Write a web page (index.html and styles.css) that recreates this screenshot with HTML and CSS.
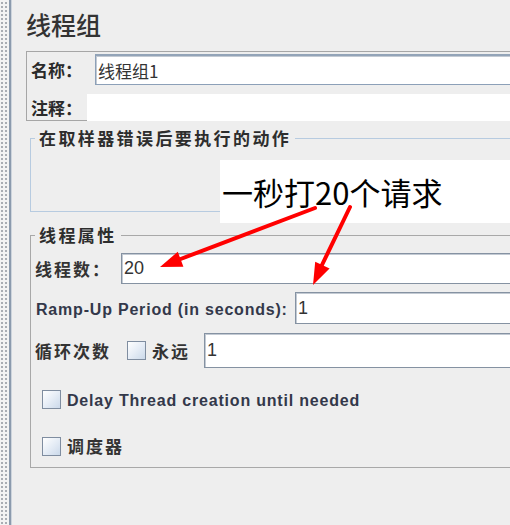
FILE: index.html
```html
<!DOCTYPE html>
<html lang="zh">
<head>
<meta charset="utf-8">
<title>线程组</title>
<link rel="stylesheet" href="styles.css">
</head>
<body>
<div class="app">
  <div class="sidebar"></div>
  <div class="main">
    <h1 class="title">线程组</h1>
    <div class="name-panel">
      <div class="row name-row">
        <span class="label strong">名称：</span>
        <div class="field name-field">线程组1</div>
      </div>
      <div class="row comment-row">
        <span class="label strong">注释：</span>
        <div class="field plain"></div>
      </div>
    </div>
    <fieldset class="group blue">
      <legend>在取样器错误后要执行的动作</legend>
      <div class="group-body empty"></div>
    </fieldset>
    <fieldset class="group gray">
      <legend>线程属性</legend>
      <div class="row r1">
        <span class="label cjk">线程数：</span>
        <div class="field f1">20</div>
      </div>
      <div class="row r2">
        <span class="label en">Ramp-Up Period (in seconds):</span>
        <div class="field f2">1</div>
      </div>
      <div class="row r3">
        <span class="label cjk">循环次数</span>
        <span class="checkbox cb-loop"></span>
        <span class="label cjk forever">永远</span>
        <div class="field f3">1</div>
      </div>
      <div class="row r4">
        <span class="checkbox"></span>
        <span class="label en">Delay Thread creation until needed</span>
      </div>
      <div class="row r5">
        <span class="checkbox"></span>
        <span class="label cjk">调度器</span>
      </div>
    </fieldset>
  </div>
  <div class="callout">一秒打20个请求</div>
  <svg class="arrows" width="510" height="525" viewBox="0 0 510 525">
    <g stroke="#ff0000" stroke-width="4" stroke-linecap="round" fill="none">
      <path d="M315 208 L178 260"/>
      <path d="M350 207 L321 267"/>
    </g>
    <g fill="#ff0000">
      <polygon points="160,267 177.8,251.7 183.4,266.7"/>
      <polygon points="313,285 315.2,261.7 329.6,268.5"/>
    </g>
  </svg>
</div>
</body>
</html>
```
FILE: styles.css
```css
html, body {
  margin: 0;
  padding: 0;
}
body {
  width: 510px;
  height: 525px;
  overflow: hidden;
  background: #eeeeee;
  font-family: "Noto Sans CJK SC", "Liberation Sans", sans-serif;
  color: #333333;
}
.app {
  position: relative;
  display: flex;
  width: 510px;
  height: 525px;
  overflow: hidden;
}
.sidebar {
  flex: 0 0 9px;
  height: 525px;
  background-color: #f3f3f3;
  background-image: radial-gradient(circle, #a9adb3 0.8px, transparent 1.2px);
  background-size: 4px 4px;
  background-position: 0 1px;
  border-right: 2px solid #8b9aad;
  box-shadow: 1px 0 0 #cdd4dc;
}
.main {
  flex: 0 0 560px;
  padding: 12px 0 0 15px;
  box-sizing: border-box;
}
.title {
  margin: 0 0 15px 0;
  font-size: 25px;
  line-height: 24px;
  height: 24px;
  font-weight: 500;
  color: #333333;
}
.name-panel {
  border: 1px solid #a6a6a6;
  padding: 2px 0 0 0;
  height: 70px;
  box-sizing: border-box;
}
.row {
  display: flex;
  align-items: center;
}
.label {
  font-size: 17px;
  line-height: 20px;
  white-space: nowrap;
}
.label.strong {
  font-weight: 700;
  color: #2a2a2a;
}
.name-row {
  height: 31px;
  padding-left: 4px;
}
.name-row .label {
  width: 64px;
}
.name-field {
  flex: 1;
  height: 31px;
}
.comment-row {
  margin-top: 9px;
  height: 27px;
  padding-left: 4px;
}
.comment-row .label {
  width: 56px;
}
.field {
  box-sizing: border-box;
  background: #ffffff;
  border: 1px solid #8592a2;
  border-right: none;
  box-shadow: inset 1px 1px 0 #c3cad3;
  font-family: "Liberation Sans", "Noto Sans CJK SC", sans-serif;
  font-size: 18px;
  color: #333333;
  padding-left: 2px;
  display: flex;
  align-items: center;
}
.name-field {
  font-family: "Noto Sans CJK SC", sans-serif;
  font-size: 17px;
  border-color: #8ca0b8;
  border-top: 2px solid #93a4b8;
}
.field.plain {
  flex: 1;
  height: 27px;
  border: none;
  box-shadow: none;
}
.group {
  margin: 0 0 0 4px;
  padding: 0 0 0 4px;
  min-width: 0;
  border: 1px solid #a8a8a8;
  border-right: none;
}
.group legend {
  padding: 0 4px;
  font-size: 17px;
  line-height: 18px;
  font-weight: 700;
  letter-spacing: 2.4px;
  color: #2d2d2d;
}
.group.blue {
  margin-top: 8px;
  border-color: #b7cbe0;
}
.group-body.empty {
  height: 64px;
}
.group.gray {
  margin-top: 14px;
  padding-bottom: 6px;
}
.label.cjk {
  font-weight: 700;
  letter-spacing: 2px;
  color: #333333;
}
.label.en {
  font-family: "Liberation Sans", Arial, sans-serif;
  font-weight: 700;
  font-size: 16px;
  letter-spacing: 0.8px;
  color: #33384a;
  padding-top: 3px;
}
.r1 {
  margin-top: 9px;
  height: 31px;
}
.r1 .label {
  width: 86px;
}
.f1 {
  flex: 1;
  height: 31px;
}
.r2 {
  margin-top: 8px;
  height: 32px;
  padding-left: 1px;
}
.r2 .label {
  width: 259px;
}
.f2 {
  flex: 1;
  height: 32px;
}
.r3 {
  margin-top: 9px;
  height: 35px;
}
.r3 .label:first-child {
  width: 92px;
}
.checkbox {
  flex: 0 0 auto;
  width: 19px;
  height: 19px;
  box-sizing: border-box;
  border: 1px solid #7f8da0;
  background: linear-gradient(135deg, #ffffff 0%, #e6edf6 50%, #cbd9ea 100%);
}
.forever {
  margin-left: 6px;
  width: 52px;
}
.f3 {
  flex: 1;
  height: 35px;
}
.r4 {
  margin-top: 16px;
  height: 30px;
  padding-left: 7px;
}
.r4 .checkbox, .r5 .checkbox {
  margin-right: 6px;
}
.r5 {
  margin-top: 17px;
  height: 30px;
  padding-left: 7px;
}
.callout {
  position: absolute;
  left: 220px;
  top: 160px;
  width: 290px;
  height: 63px;
  background: #ffffff;
  font-family: "Noto Sans CJK SC", sans-serif;
  font-size: 31px;
  line-height: 63px;
  color: #000000;
  padding-left: 2px;
  box-sizing: border-box;
  white-space: nowrap;
}
.arrows {
  position: absolute;
  left: 0;
  top: 0;
  pointer-events: none;
}
```
